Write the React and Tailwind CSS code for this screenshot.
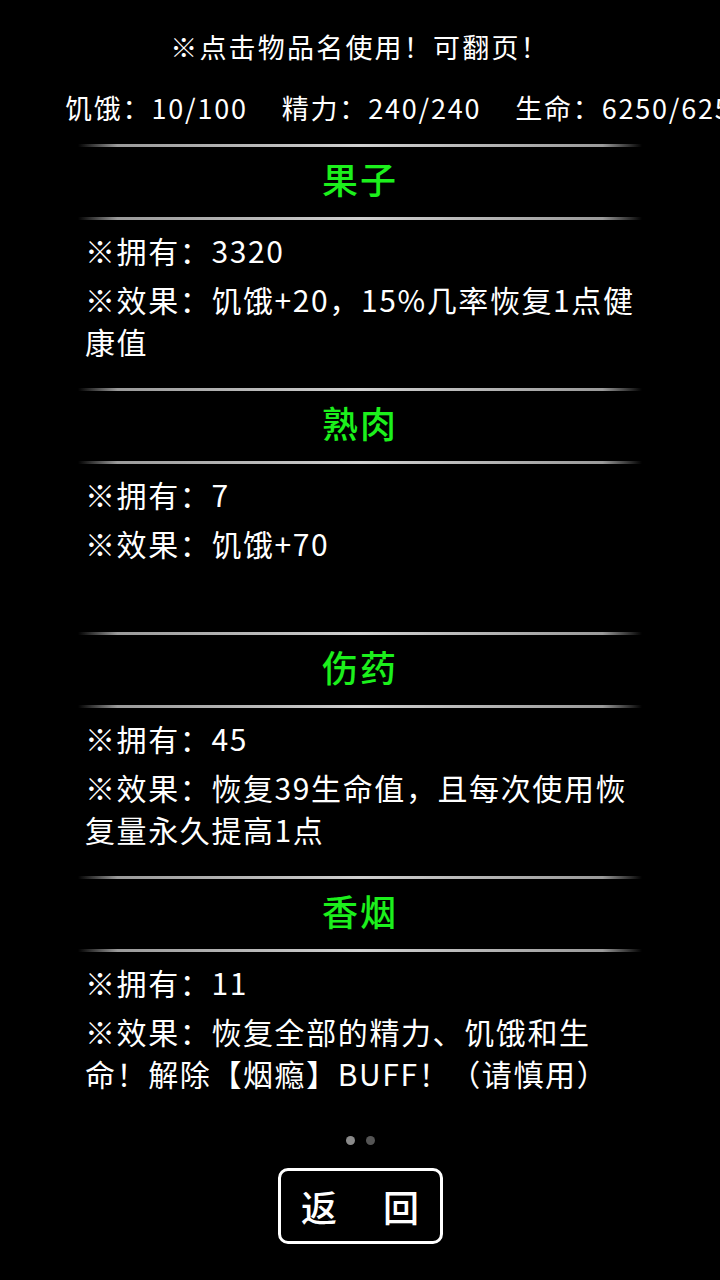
const items = [
  {
    name: '果子',
    count: 3320,
    effect: ['※效果：饥饿+20，15%几率恢复1点健', '康值'],
  },
  {
    name: '熟肉',
    count: 7,
    effect: ['※效果：饥饿+70'],
  },
  {
    name: '伤药',
    count: 45,
    effect: ['※效果：恢复39生命值，且每次使用恢', '复量永久提高1点'],
  },
  {
    name: '香烟',
    count: 11,
    effect: ['※效果：恢复全部的精力、饥饿和生', '命！解除【烟瘾】BUFF！（请慎用）'],
  },
]

const stats = [
  { label: '饥饿', value: '10/100' },
  { label: '精力', value: '240/240' },
  { label: '生命', value: '6250/6250' },
]

function Divider() {
  return (
    <div className="h-[3px] w-full bg-[linear-gradient(90deg,transparent,#9a9a9a_7%,#d0d0d0_50%,#9a9a9a_93%,transparent)]" />
  )
}

function ItemBlock({ item }) {
  return (
    <div className="h-[244px] flex flex-col">
      <Divider />
      <div className="h-[70px] pb-[8px] flex items-center justify-center">
        <button className="text-[36px] leading-none font-medium text-[#1cf01c] tracking-[2px]">
          {item.name}
        </button>
      </div>
      <Divider />
      <div className="pl-[7px] pt-[8px] text-white text-[30px] tracking-[1.6px]">
        <div className="h-[44px] leading-[44px] whitespace-nowrap">※拥有：{item.count}</div>
        <div className="mt-[6px] leading-[42px]">
          {item.effect.map(line => (
            <div key={line} className="whitespace-nowrap">{line}</div>
          ))}
        </div>
      </div>
    </div>
  )
}

export default function App() {
  return (
    <div className="w-[720px] h-[1280px] bg-black text-white overflow-hidden font-['Noto_Sans_CJK_SC','Noto_Sans',sans-serif]">
      {/* Header */}
      <div className="pt-[27px] h-[67px] text-center text-[27px] leading-[40px] tracking-[2.2px]">
        ※点击物品名使用！可翻页！
      </div>
      <div className="mt-[21px] h-[40px] pl-[65px] flex items-center gap-[34px] whitespace-nowrap overflow-hidden text-[27px] tracking-[1.8px]">
        {stats.map(s => (
          <span key={s.label}>{s.label}：{s.value}</span>
        ))}
      </div>

      {/* Items */}
      <div className="mt-[16px] w-[564px] ml-[78px]">
        {items.map(item => (
          <ItemBlock key={item.name} item={item} />
        ))}
      </div>

      {/* Pager dots */}
      <div className="mt-[16px] flex justify-center gap-[11px]">
        <span className="w-[9px] h-[9px] rounded-full bg-[#8a8a8a]" />
        <span className="w-[9px] h-[9px] rounded-full bg-[#555]" />
      </div>

      {/* Back button */}
      <div className="mt-[23px] flex justify-center">
        <button className="w-[165px] h-[76px] border-[3px] border-white rounded-[10px] flex items-center justify-center gap-[46px] text-[36px] font-medium text-white">
          <span>返</span>
          <span>回</span>
        </button>
      </div>
    </div>
  )
}
